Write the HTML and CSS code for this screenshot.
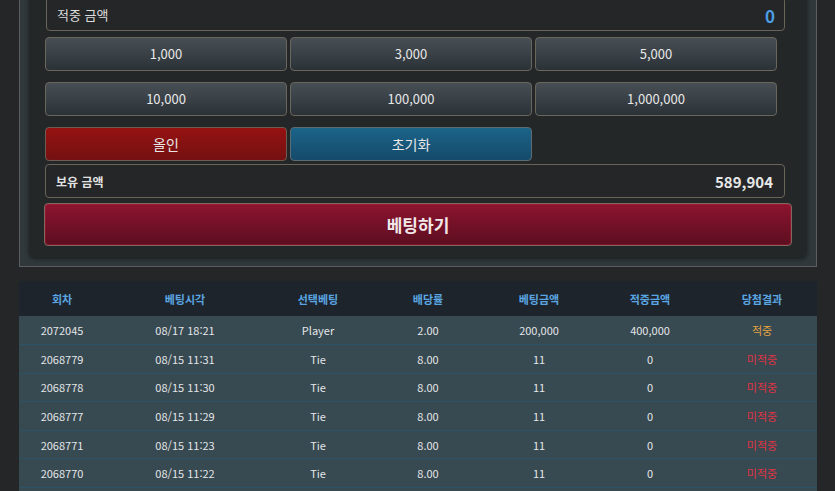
FILE: index.html
```html
<!DOCTYPE html>
<html lang="ko">
<head>
<meta charset="utf-8">
<link rel="stylesheet" href="styles.css">
</head>
<body>
<div class="page">
  <div class="outer">
    <div class="inner">
      <div class="field field-top">
        <span class="label">적중 금액</span>
        <span class="value blue">0</span>
      </div>
      <div class="chips">
        <button class="btn">1,000</button>
        <button class="btn">3,000</button>
        <button class="btn">5,000</button>
      </div>
      <div class="chips">
        <button class="btn">10,000</button>
        <button class="btn">100,000</button>
        <button class="btn">1,000,000</button>
      </div>
      <div class="chips chips-last">
        <button class="btn red">올인</button>
        <button class="btn blue-btn">초기화</button>
      </div>
      <div class="field field-hold">
        <span class="label bold">보유 금액</span>
        <span class="value white">589,904</span>
      </div>
      <button class="bet">베팅하기</button>
    </div>
  </div>

  <div class="history-wrap">
  <table class="history">
    <colgroup>
      <col style="width:86px"><col style="width:160px"><col style="width:106px"><col style="width:114px"><col style="width:108px"><col style="width:114px"><col style="width:110px">
    </colgroup>
    <thead>
      <tr><th>회차</th><th>베팅시각</th><th>선택베팅</th><th>배당률</th><th>베팅금액</th><th>적중금액</th><th>당첨결과</th></tr>
    </thead>
    <tbody>
      <tr><td>2072045</td><td>08/17 18:21</td><td>Player</td><td>2.00</td><td>200,000</td><td>400,000</td><td class="win">적중</td></tr>
      <tr><td>2068779</td><td>08/15 11:31</td><td>Tie</td><td>8.00</td><td>11</td><td>0</td><td class="lose">미적중</td></tr>
      <tr><td>2068778</td><td>08/15 11:30</td><td>Tie</td><td>8.00</td><td>11</td><td>0</td><td class="lose">미적중</td></tr>
      <tr><td>2068777</td><td>08/15 11:29</td><td>Tie</td><td>8.00</td><td>11</td><td>0</td><td class="lose">미적중</td></tr>
      <tr><td>2068771</td><td>08/15 11:23</td><td>Tie</td><td>8.00</td><td>11</td><td>0</td><td class="lose">미적중</td></tr>
      <tr><td>2068770</td><td>08/15 11:22</td><td>Tie</td><td>8.00</td><td>11</td><td>0</td><td class="lose">미적중</td></tr>
    </tbody>
  </table>
  </div>
</div>
</body>
</html>
```

FILE: styles.css
```css
* { box-sizing: border-box; }

html, body {
  margin: 0;
  padding: 0;
  background: #242627;
  overflow: hidden;
}

body {
  font-family: "Noto Sans CJK KR", "Noto Sans", sans-serif;
  color: #e6e6e6;
}

.page {
  width: 798px;
  margin-left: 19px;
}

.outer {
  margin-top: -20px;
  border: 1px solid #5c5e5d;
  background: #30383b;
  padding: 0 9px 9px 9px;
}

.inner {
  background: #232728;
  border-radius: 0 0 6px 6px;
  box-shadow: 0 2px 4px rgba(0, 0, 0, 0.45);
  padding: 16px 0 11px 16px;
}

.field {
  width: 740px;
  height: 34px;
  border: 1px solid #6a6459;
  border-radius: 4px;
  background: #252627;
  display: flex;
  align-items: center;
  justify-content: space-between;
  padding: 0 9px 0 10px;
}

.field-top {
  margin-left: 1px;
  width: 739px;
}

.field-top .label {
  font-size: 13px;
  color: #dcdcdc;
}

.value.blue {
  color: #4b9de3;
  font-weight: 700;
  font-size: 17px;
  padding-top: 2px;
}

.chips {
  display: grid;
  grid-template-columns: 242px 242px 242px;
  column-gap: 3px;
  margin-top: 6px;
}

.chips + .chips {
  margin-top: 11px;
}

.btn {
  height: 34px;
  border: 1px solid #6b665c;
  border-radius: 4px;
  background: linear-gradient(#474f55, #2b3237);
  color: #e8e8e8;
  font-family: "Noto Sans CJK KR", "Noto Sans", sans-serif;
  font-size: 13px;
  padding: 0;
  line-height: 32px;
}

.btn.red {
  background: linear-gradient(#961212, #741111);
  border-color: #6e5c52;
  font-size: 14px;
}

.btn.blue-btn {
  background: linear-gradient(#1b6489, #154a6a);
  border-color: #5c6c72;
  font-size: 14px;
}

.field-hold {
  margin-top: 3px;
  padding-right: 11px;
}

.label.bold {
  font-size: 12px;
  font-weight: 700;
  color: #e2e2e2;
}

.value.white {
  font-size: 15px;
  font-weight: 700;
  color: #e8e8e8;
}

.bet {
  display: block;
  width: 748px;
  height: 43px;
  margin: 5px 0 0 -1px;
  border: 1px solid #7c6a62;
  border-radius: 4px;
  background: linear-gradient(#8c1430, #5c0e20);
  box-shadow: inset 0 0 0 1px rgba(200, 30, 50, 0.35);
  color: #f2e8ea;
  font-family: "Noto Sans CJK KR", "Noto Sans", sans-serif;
  font-size: 17px;
  font-weight: 700;
  padding: 0;
}

.history-wrap {
  margin-top: 14px;
  background: #374951;
  min-height: 240px;
}

.history {
  width: 798px;
  border-collapse: collapse;
  table-layout: fixed;
  font-size: 11px;
}

.history th {
  background: #1d242b;
  color: #5ba6e2;
  font-weight: 700;
  height: 35px;
  text-align: center;
  padding: 0;
}

.history td {
  background: #374951;
  color: #e4e6e8;
  height: 28.6px;
  text-align: center;
  padding: 0;
  border-bottom: 1px solid #2c5467;
}

.history td.win {
  color: #e3a443;
}

.history td.lose {
  color: #e03444;
}
```
